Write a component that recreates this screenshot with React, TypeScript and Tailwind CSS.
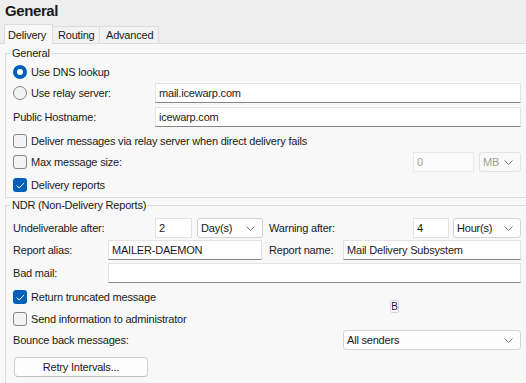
import type { ReactNode } from "react";

function Chevron() {
	return (
		<svg width="9" height="5" viewBox="0 0 9 5" fill="none">
			<path d="M0.5 0.5L4.5 4.5L8.5 0.5" stroke="#7a7a7a" strokeWidth="1" />
		</svg>
	);
}

function Radio({ checked, label }: { checked?: boolean; label: string }) {
	return (
		<div className="flex items-center gap-[4px]">
			{checked ? (
				<div className="flex h-[14px] w-[14px] items-center justify-center rounded-full bg-[#005fb8]">
					<div className="h-[6px] w-[6px] rounded-full bg-white" />
				</div>
			) : (
				<div className="h-[14px] w-[14px] rounded-full border border-[#858585] bg-[#f3f3f3]" />
			)}
			<span>{label}</span>
		</div>
	);
}

function Check({ checked, label }: { checked?: boolean; label: string }) {
	return (
		<div className="flex items-center gap-[4px]">
			{checked ? (
				<div className="flex h-[14px] w-[14px] items-center justify-center rounded-[3px] bg-[#005fb8]">
					<svg width="9" height="7" viewBox="0 0 9 7" fill="none">
						<path d="M0.8 3.6L3.2 6L8.2 0.9" stroke="white" strokeWidth="1" />
					</svg>
				</div>
			) : (
				<div className="h-[14px] w-[14px] rounded-[3px] border border-[#858585] bg-[#f3f3f3]" />
			)}
			<span>{label}</span>
		</div>
	);
}

function Input({ value, className = "", plain }: { value?: string; className?: string; plain?: boolean }) {
	return (
		<div
			className={`flex h-[20px] items-center border border-[#e3e3e3] bg-white px-[3px] ${
				plain ? "" : "border-b-[#868686]"
			} ${className}`}
		>
			{value}
		</div>
	);
}

function Select({ value, className = "", disabled }: { value: string; className?: string; disabled?: boolean }) {
	return (
		<div
			className={`flex h-[20px] items-center justify-between rounded-[3px] border pl-[3px] pr-[7px] ${
				disabled ? "border-[#e3e3e3] bg-[#f9f9f9] text-[#a0a0a0]" : "border-[#d3d3d3] bg-[#fdfdfd]"
			} ${className}`}
		>
			<span>{value}</span>
			<Chevron />
		</div>
	);
}

function Row({ children, className = "" }: { children: ReactNode; className?: string }) {
	return <div className={`flex h-[20px] items-center ${className}`}>{children}</div>;
}

function Group({ title, children, className = "" }: { title: string; children: ReactNode; className?: string }) {
	return (
		<fieldset className={`w-[526px] border border-[#dcdcdc] pl-[7px] pr-[9px] ${className}`}>
			<legend className="ml-[-2px] px-[1px] leading-[14px]">{title}</legend>
			{children}
		</fieldset>
	);
}

export default function App() {
	return (
		<div className="relative h-[383px] w-[526px] overflow-hidden bg-[#efefef] font-['Liberation_Sans',Arial,sans-serif] text-[11px] leading-[14px] tracking-[-0.2px] text-[#1a1a1a]">
			<div className="h-[24px] pl-[5px] pt-[2px] text-[15px] font-bold leading-[18px] tracking-[-0.4px]">General</div>

			<div className="flex h-[19px] items-end pl-[4px]">
				<div className="relative z-10 mb-[-1px] flex h-[20px] w-[49px] items-center border border-b-0 border-[#dcdcdc] bg-[#f8f8f8] pl-[3px]">
					Delivery
				</div>
				<div className="flex h-[17px] w-[47px] items-center border-r border-t border-[#dcdcdc] bg-[#f3f3f3] pl-[5px]">
					Routing
				</div>
				<div className="flex h-[17px] w-[59px] items-center border-r border-t border-[#dcdcdc] bg-[#f3f3f3] pl-[6px]">
					Advanced
				</div>
			</div>

			<div className="h-[340px] w-[540px] border-t border-[#dcdcdc] bg-[#f8f8f8] pl-[5px] pt-[2px]">
				<Group title="General" className="pb-[2px]">
					<Row className="mt-[2px]">
						<Radio checked label="Use DNS lookup" />
					</Row>
					<Row className="mt-[1px]">
						<div className="w-[142px]">
							<Radio label="Use relay server:" />
						</div>
						<Input value="mail.icewarp.com" className="flex-1" />
					</Row>
					<Row className="mt-[4px]">
						<div className="w-[142px]">Public Hostname:</div>
						<Input value="icewarp.com" className="flex-1" />
					</Row>
					<Row className="mt-[4px]">
						<Check label="Deliver messages via relay server when direct delivery fails" />
					</Row>
					<Row className="mt-[1px]">
						<div className="w-[400px]">
							<Check label="Max message size:" />
						</div>
						<div className="flex h-[20px] w-[61px] items-center border border-[#e8e8e8] bg-[#fbfbfb] px-[3px] text-[#a0a0a0]">
							0
						</div>
						<Select value="MB" disabled className="ml-[5px] w-[42px]" />
					</Row>
					<Row className="mt-[3px]">
						<Check checked label="Delivery reports" />
					</Row>
				</Group>

				<Group title="NDR (Non-Delivery Reports)" className="h-[200px]">
					<Row className="mt-[6px]">
						<div className="w-[142px]">Undeliverable after:</div>
						<Input value="2" plain className="w-[37px]" />
						<Select value="Day(s)" className="ml-[5px] w-[66px]" />
						<div className="ml-[6px] w-[144px]">Warning after:</div>
						<Input value="4" plain className="w-[36px]" />
						<Select value="Hour(s)" className="ml-[4px] flex-1" />
					</Row>
					<Row className="mt-[2px]">
						<div className="w-[95px]">Report alias:</div>
						<Input value="MAILER-DAEMON" className="w-[154px]" />
						<div className="ml-[7px] w-[74px]">Report name:</div>
						<Input value="Mail Delivery Subsystem" className="flex-1" />
					</Row>
					<Row className="mt-[3px]">
						<div className="w-[95px]">Bad mail:</div>
						<Input className="flex-1" />
					</Row>
					<Row className="mt-[4px]">
						<Check checked label="Return truncated message" />
					</Row>
					<Row className="mt-[2px]">
						<Check label="Send information to administrator" />
					</Row>
					<Row className="mt-[1px]">
						<div className="w-[330px]">Bounce back messages:</div>
						<Select value="All senders" className="flex-1" />
					</Row>
					<div className="ml-[1px] mt-[7px] flex h-[20px] w-[134px] items-center justify-center rounded-[4px] border border-[#d0d0d0] border-b-[#bdbdbd] bg-[#fdfdfd]">
						Retry Intervals...
					</div>
				</Group>
			</div>

			<div className="absolute left-[390px] top-[300px] flex h-[13px] w-[9px] items-center justify-center rounded-[2px] border border-[#d8d8d8] bg-white text-[10px] leading-none tracking-normal text-[#1e0b5a]">
				B
			</div>
		</div>
	);
}
